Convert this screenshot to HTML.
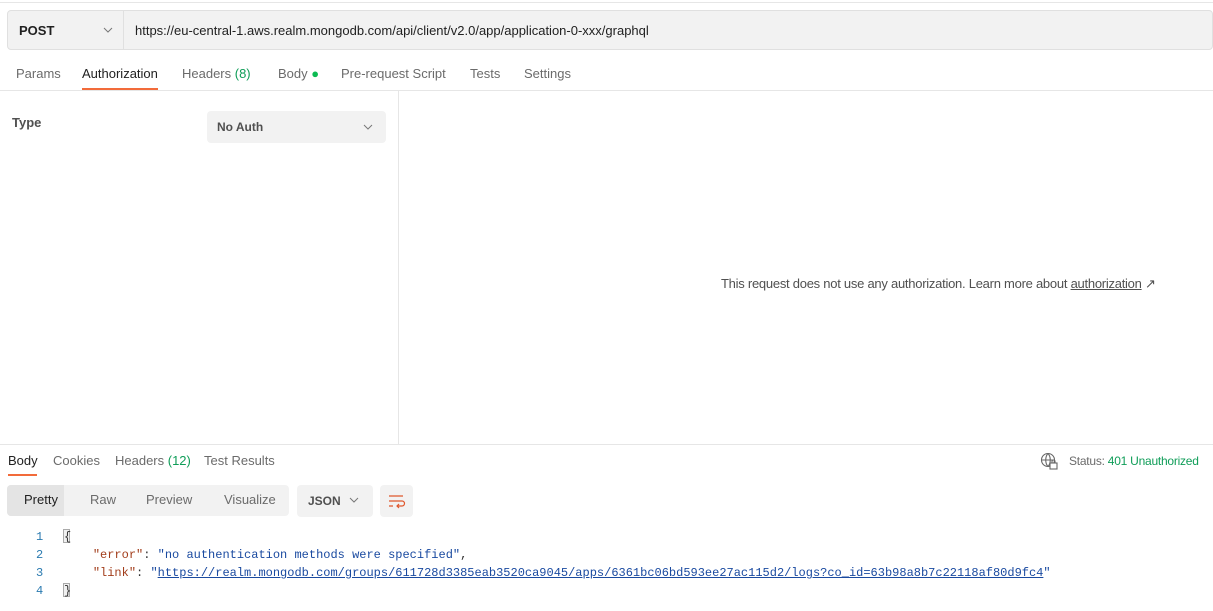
<!DOCTYPE html>
<html><head><style>
*{box-sizing:border-box;margin:0;padding:0}
body{width:1213px;height:611px;background:#fff;font-family:"Liberation Sans",sans-serif;font-size:13px;color:#212121;position:relative;overflow:hidden}
.a{position:absolute;white-space:nowrap}
.g{color:#6b6b6b}
.mono{font-family:"Liberation Mono",monospace;font-size:12px}
</style></head><body>
<div class="a" style="left:0;top:2px;width:1213px;height:1px;background:#e6e6e6"></div>
<div class="a" style="left:7px;top:10px;width:1206px;height:40px;background:#f2f2f2;border:1px solid #e0e0e0;border-radius:4px"></div>
<div class="a" style="left:123px;top:11px;width:1px;height:38px;background:#e0e0e0"></div>
<div class="a" style="left:19px;top:23px;font-weight:bold">POST</div>
<svg class="a" style="left:103px;top:26px" width="10" height="8"><path d="M1 2l4 4 4-4" stroke="#777" fill="none"/></svg>
<div class="a" style="left:135px;top:23px">https://eu-central-1.aws.realm.mongodb.com/api/client/v2.0/app/application-0-xxx/graphql</div>

<div class="a g" style="left:16px;top:66px">Params</div>
<div class="a" style="left:82px;top:66px">Authorization</div>
<div class="a" style="left:82px;top:88px;width:76px;height:2px;background:#f26b3a"></div>
<div class="a g" style="left:182px;top:66px">Headers <span style="color:#0f9d58">(8)</span></div>
<div class="a g" style="left:278px;top:66px">Body <span style="color:#0cbb52">●</span></div>
<div class="a g" style="left:341px;top:66px">Pre-request Script</div>
<div class="a g" style="left:470px;top:66px">Tests</div>
<div class="a g" style="left:524px;top:66px">Settings</div>
<div class="a" style="left:0;top:90px;width:1213px;height:1px;background:#e6e6e6"></div>
<div class="a" style="left:398px;top:91px;width:1px;height:353px;background:#e6e6e6"></div>

<div class="a" style="left:12px;top:115px;font-weight:bold;color:#505050">Type</div>
<div class="a" style="left:207px;top:111px;width:179px;height:32px;background:#f2f2f2;border-radius:4px"></div>
<div class="a" style="left:217px;top:120px;font-weight:bold;font-size:12px;color:#505050">No Auth</div>
<svg class="a" style="left:363px;top:123px" width="10" height="8"><path d="M1 2l4 4 4-4" stroke="#777" fill="none"/></svg>

<div class="a" style="left:721px;top:276px;color:#505050;letter-spacing:-0.02em">This request does not use any authorization. Learn more about <span style="text-decoration:underline;color:#505050">authorization</span> ↗</div>

<div class="a" style="left:0;top:444px;width:1213px;height:1px;background:#e6e6e6"></div>
<div class="a" style="left:8px;top:453px">Body</div>
<div class="a" style="left:8px;top:474px;width:29px;height:2px;background:#f26b3a"></div>
<div class="a g" style="left:53px;top:453px">Cookies</div>
<div class="a g" style="left:115px;top:453px">Headers <span style="color:#0f9d58">(12)</span></div>
<div class="a g" style="left:204px;top:453px">Test Results</div>
<svg class="a" style="left:1040px;top:452px" width="18" height="18" fill="none" stroke="#666" stroke-width="1.1"><circle cx="8" cy="8" r="6.5"/><path d="M1.5 8h13M8 1.5c-3 3-3 10 0 13M8 1.5c3 3 3 10 0 13"/><rect x="10" y="11" width="7" height="6" fill="#fff"/><path d="M12 11v-1.5a1.5 1.5 0 013 0V11"/></svg>
<div class="a g" style="left:1069px;top:454px;font-size:12px;letter-spacing:-0.02em">Status: <span style="color:#0f9d58">401 Unauthorized</span></div>

<div class="a" style="left:7px;top:485px;width:282px;height:31px;background:#f2f2f2;border-radius:4px"></div>
<div class="a" style="left:7px;top:485px;width:57px;height:31px;background:#e4e4e4;border-radius:4px 0 0 4px"></div>
<div class="a" style="left:24px;top:492px">Pretty</div>
<div class="a g" style="left:90px;top:492px">Raw</div>
<div class="a g" style="left:146px;top:492px">Preview</div>
<div class="a g" style="left:224px;top:492px">Visualize</div>
<div class="a" style="left:297px;top:485px;width:76px;height:32px;background:#f2f2f2;border-radius:4px"></div>
<div class="a" style="left:308px;top:494px;font-weight:bold;font-size:12px;color:#505050">JSON</div>
<svg class="a" style="left:349px;top:496px" width="10" height="8"><path d="M1 2l4 4 4-4" stroke="#777" fill="none"/></svg>
<div class="a" style="left:380px;top:485px;width:33px;height:32px;background:#f2f2f2;border-radius:4px"></div>
<svg class="a" style="left:388px;top:493px" width="18" height="16" fill="none" stroke="#e0572c" stroke-width="1.2"><path d="M1 3h14M1 8h13a2.5 2.5 0 010 5H9M11 11l-2 2 2 2M1 13h4"/></svg>

<div class="a mono" style="left:36px;top:528px;color:#2a7ab0;line-height:18px">1<br>2<br>3<br>4</div>
<div class="a" style="left:63px;top:529px;width:7px;height:14px;border:1px solid #aaa;background:#f0f0f0"></div>
<div class="a" style="left:63px;top:583px;width:7px;height:14px;border:1px solid #aaa;background:#f0f0f0"></div>
<div class="a mono" style="left:64px;top:528px;line-height:18px;color:#333">{<br>&nbsp;&nbsp;&nbsp;&nbsp;<span style="color:#a23d1b">"error"</span>: <span style="color:#1a4aa0">"no authentication methods were specified"</span>,<br>&nbsp;&nbsp;&nbsp;&nbsp;<span style="color:#a23d1b">"link"</span>: <span style="color:#1a4aa0">"<span style="text-decoration:underline">https://realm.mongodb.com/groups/611728d3385eab3520ca9045/apps/6361bc06bd593ee27ac115d2/logs?co_id=63b98a8b7c22118af80d9fc4</span>"</span><br>}</div>
</body></html>
